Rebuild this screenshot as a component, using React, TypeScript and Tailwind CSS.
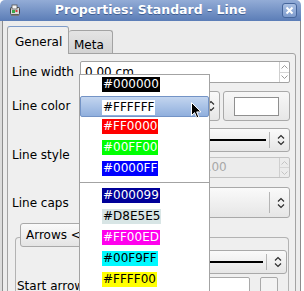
import React from 'react'

const COLORS: { hex: string; fg: string }[] = [
  { hex: '#000000', fg: 'text-white' },
  { hex: '#FFFFFF', fg: 'text-black' },
  { hex: '#FF0000', fg: 'text-white' },
  { hex: '#00FF00', fg: 'text-white' },
  { hex: '#0000FF', fg: 'text-white' },
]

const CUSTOM: { hex: string; fg: string }[] = [
  { hex: '#000099', fg: 'text-white' },
  { hex: '#D8E5E5', fg: 'text-black' },
  { hex: '#FF00ED', fg: 'text-white' },
  { hex: '#00F9FF', fg: 'text-black' },
  { hex: '#FFFF00', fg: 'text-black' },
]

const SWATCH: Record<string, string> = {
  '#000000': 'bg-[#000000]',
  '#FFFFFF': 'bg-[#FFFFFF]',
  '#FF0000': 'bg-[#FF0000]',
  '#00FF00': 'bg-[#00FF00]',
  '#0000FF': 'bg-[#0000FF]',
  '#000099': 'bg-[#000099]',
  '#D8E5E5': 'bg-[#D8E5E5]',
  '#FF00ED': 'bg-[#FF00ED]',
  '#00F9FF': 'bg-[#00F9FF]',
  '#FFFF00': 'bg-[#FFFF00]',
}

function UpDown() {
  return (
    <svg width="8" height="12" viewBox="0 0 8 12">
      <path d="M1 4.5 L4 1.5 L7 4.5" fill="none" stroke="#2e2e2e" strokeWidth="1.2" />
      <path d="M1 7.5 L4 10.5 L7 7.5" fill="none" stroke="#2e2e2e" strokeWidth="1.2" />
    </svg>
  )
}

function SpinArrows({ disabled }: { disabled?: boolean }) {
  const stroke = disabled ? '#c4c4c4' : '#9a9a9a'
  return (
    <div className="flex flex-col w-[10px] h-full border-l border-[#cfcfcf]">
      <div className="flex-1 flex items-center justify-center border-b border-[#d6d6d6]">
        <svg width="7" height="4" viewBox="0 0 7 4"><path d="M0.5 3.5 L3.5 0.5 L6.5 3.5" fill="none" stroke={stroke} /></svg>
      </div>
      <div className="flex-1 flex items-center justify-center">
        <svg width="7" height="4" viewBox="0 0 7 4"><path d="M0.5 0.5 L3.5 3.5 L6.5 0.5" fill="none" stroke={stroke} /></svg>
      </div>
    </div>
  )
}

function Combo({ className, children, sep }: { className: string; children?: React.ReactNode; sep?: boolean }) {
  return (
    <div className={`flex items-center rounded-[3px] border border-[#a9a9a9] bg-gradient-to-b from-[#fafafa] to-[#e6e6e6] ${className}`}>
      <div className="flex-1 flex items-center h-full">{children}</div>
      {sep && <div className="w-px h-[70%] bg-[#b5b5b5] mr-[7px]" />}
      <div className="mr-[4px]"><UpDown /></div>
    </div>
  )
}

function TitleIcon() {
  return (
    <svg width="12" height="13" viewBox="0 0 12 13">
      <rect x="1.5" y="3.5" width="9" height="7" rx="1" fill="#d9d9d9" stroke="#444" />
      <rect x="3" y="1" width="5" height="4" fill="#f4f4f4" stroke="#555" strokeWidth="0.8" />
      <rect x="3" y="6" width="3" height="3" fill="#3aa84a" />
      <rect x="6.5" y="6" width="2" height="2" fill="#d23a3a" />
      <rect x="2" y="10.5" width="8" height="1.5" fill="#777" />
    </svg>
  )
}

function Cursor() {
  return (
    <svg width="11" height="17" viewBox="0 0 11 17">
      <path d="M0.5 0.5 L0.5 13.5 L3.6 10.6 L5.8 15.8 L7.8 15 L5.7 9.9 L10 9.9 Z" fill="#000" stroke="#fff" strokeWidth="1" />
    </svg>
  )
}

function ColorRow({ hex, fg, selected }: { hex: string; fg: string; selected?: boolean }) {
  return (
    <div
      className={
        selected
          ? 'flex items-start h-[21px] pl-[21px] pt-[3px] border border-[#7393c6] rounded-[2px] bg-gradient-to-b from-[#c3d5ef] to-[#90afdd]'
          : 'flex items-start h-[21px] pl-[22px] pt-[2px]'
      }
    >
      <span className={`px-px h-[15px] leading-[15px] ${SWATCH[hex]} ${fg}`}>{hex}</span>
    </div>
  )
}

export default function App() {
  return (
    <div className="relative w-[304px] h-[291px] overflow-hidden bg-white font-['DejaVu_Sans',sans-serif] text-[12px] text-black">
      <div className="w-[301px] h-full flex flex-col">
        {/* Title bar */}
        <div className="h-[21px] shrink-0 rounded-t-[5px] bg-gradient-to-b from-[#93acd6] to-[#5b7db7] grid grid-cols-[1fr_auto_1fr] items-center">
          <div className="pl-[9px] flex items-center"><TitleIcon /></div>
          <span className="text-white font-bold text-[12.5px] leading-none [text-shadow:0_1px_0_#3f5f94]">Properties: Standard - Line</span>
          <div className="flex justify-end pr-[4px]">
            <div className="w-[15px] h-[15px] rounded-[3px] border border-[#46669c] bg-gradient-to-b from-[#a9bfe2] to-[#7d9bcd] flex items-center justify-center">
              <svg width="9" height="9" viewBox="0 0 9 9"><path d="M1.5 1.5 L7.5 7.5 M7.5 1.5 L1.5 7.5" stroke="#fff" strokeWidth="2" /></svg>
            </div>
          </div>
        </div>

        {/* Body */}
        <div className="flex-1 bg-[#dcdcdc] pl-[2px]">
          <div className="h-full border-l border-r border-[#8d8d8d] bg-[#ececec] px-[4px] pt-[5px] flex flex-col">
            {/* Tabs */}
            <div className="flex items-end h-[27px] shrink-0">
              <div className="relative z-10 -mb-px h-[28px] w-[62px] rounded-t-[3px] border border-b-0 border-[#a3a3a3] border-t-[#7d9bc9] bg-[#efefef] pl-[7px] pt-[6px]">
                General
              </div>
              <div className="h-[23px] w-[44px] rounded-t-[3px] border border-l-0 border-b-0 border-[#a3a3a3] bg-gradient-to-b from-[#e4e4e4] to-[#d3d3d3] pl-[5px] pt-[5px]">
                Meta
              </div>
            </div>

            {/* Panel */}
            <div className="flex-1 border border-[#a3a3a3] rounded-tr-[3px] bg-[#efefef] px-[4px] flex flex-col">
              <div className="mt-[7px] flex items-center h-[22px]">
                <span className="w-[68px]">Line width</span>
                <div className="w-[210px] h-full flex border border-[#a3a3a3] rounded-[2px] bg-white">
                  <span className="flex-1 pl-[4px] leading-[20px]">0.00 cm</span>
                  <SpinArrows />
                </div>
              </div>

              <div className="mt-[8px] flex items-center h-[30px]">
                <span className="w-[68px]">Line color</span>
                <Combo className="w-[140px] h-full" />
                <div className="ml-[3px] w-[67px] h-full rounded-[3px] border border-[#a9a9a9] bg-gradient-to-b from-[#f7f7f7] to-[#e7e7e7] flex items-center justify-center">
                  <div className="w-[45px] h-[19px] border border-[#8f8f8f] bg-white" />
                </div>
              </div>

              <div className="mt-[7px] flex items-center">
                <span className="w-[68px] pt-[3px]">Line style</span>
                <div className="flex flex-col w-[210px]">
                  <Combo className="h-[24px]" sep>
                    <div className="ml-[6px] mr-[3px] flex-1 h-[2px] bg-black" />
                  </Combo>
                  <div className="mt-[5px] h-[21px] flex border border-[#c3c3c3] rounded-[2px] bg-[#ececec]">
                    <span className="flex-1 pl-[119px] leading-[19px] text-[#a8a8a8]">0.00</span>
                    <SpinArrows disabled />
                  </div>
                </div>
              </div>

              <div className="mt-[9px] flex items-center h-[31px]">
                <span className="w-[68px]">Line caps</span>
                <Combo className="w-[210px] h-full" sep />
              </div>

              {/* Arrows group */}
              <div className="mt-[5px] flex flex-col">
                <div className="relative z-10 ml-[8px] w-[110px] h-[24px] rounded-[3px] border border-[#a9a9a9] bg-gradient-to-b from-[#fafafa] to-[#e4e4e4] pl-[5px] leading-[22px]">
                  Arrows &lt;&lt;
                </div>
                <div className="-mt-[10px] ml-[3px] w-[274px] h-[60px] border border-b-0 border-[#b3b3b3] rounded-t-[4px] flex flex-col">
                  <Combo className="mt-[12px] ml-[64px] w-[207px] h-[26px]" sep>
                    <div className="ml-[6px] mr-[3px] flex-1 h-[2px] bg-black" />
                  </Combo>
                  <div className="mt-[2px] flex items-start">
                    <span className="pl-px pt-[3px] w-[64px] whitespace-nowrap leading-[14px]">Start arrow</span>
                    <div className="mt-px w-[170px] h-[20px] rounded-[2px] border border-[#a9a9a9] bg-white" />
                    <div className="mt-px ml-[10px] w-[18px] h-[20px] rounded-[2px] border border-[#a9a9a9] bg-[#f3f3f3]" />
                  </div>
                </div>
              </div>
            </div>
          </div>
        </div>
      </div>

      {/* Color drop-down */}
      <div className="absolute z-20 left-[79px] top-[74px] w-[131px] h-[230px] border border-[#a3a3a3] bg-white">
        {COLORS.map((c, i) => (
          <ColorRow key={c.hex} hex={c.hex} fg={c.fg} selected={i === 1} />
        ))}
        <div className="mt-[2px] mb-[3px] h-px bg-[#a3a3a3]" />
        {CUSTOM.map((c) => (
          <ColorRow key={c.hex} hex={c.hex} fg={c.fg} />
        ))}
      </div>

      <div className="absolute z-30 left-[191px] top-[102px]">
        <Cursor />
      </div>
    </div>
  )
}
